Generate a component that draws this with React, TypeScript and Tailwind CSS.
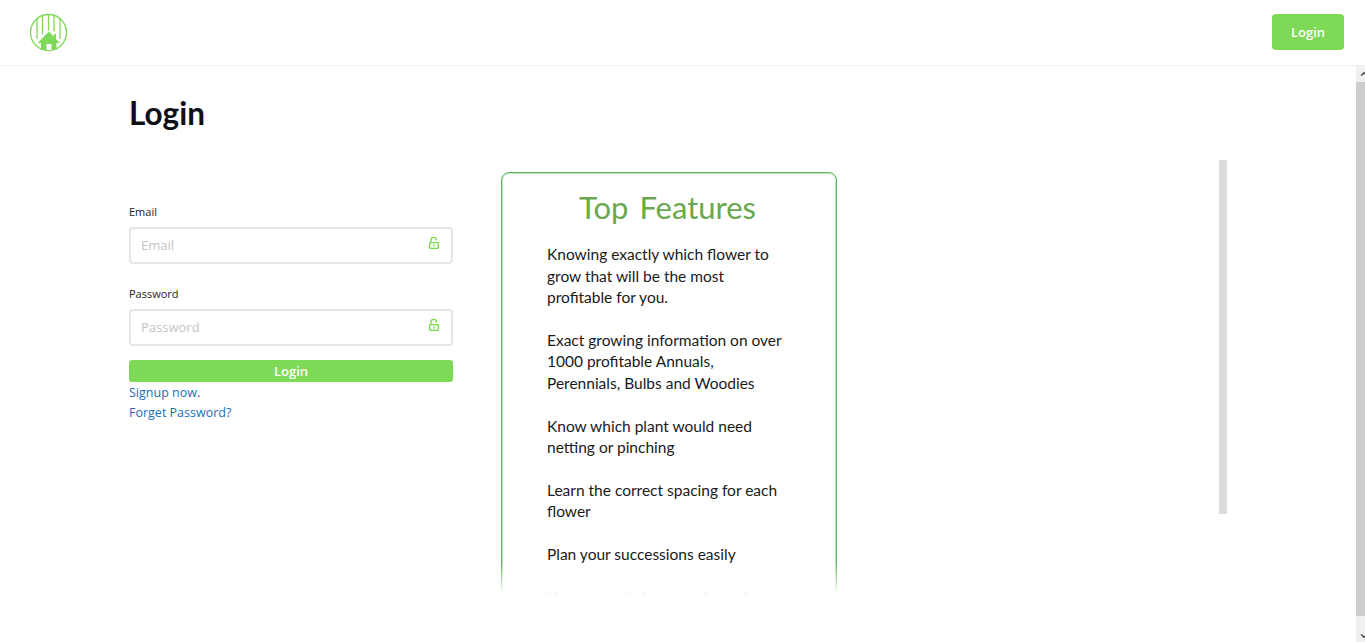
import { ChevronDown, ChevronUp } from "lucide-react";

const features = [
  "Knowing exactly which flower to grow that will be the most profitable for you.",
  "Exact growing information on over 1000 profitable Annuals, Perennials, Bulbs and Woodies",
  "Know which plant would need netting or pinching",
  "Learn the correct spacing for each flower",
  "Plan your successions easily",
  "Know exactly how much to plant",
];

function Logo() {
  return (
    <svg width="40" height="40" viewBox="0 0 40 40" fill="none">
      <circle cx="19.5" cy="19.5" r="18" stroke="#7ed957" strokeWidth="1.3" />
      <path d="M8 5v21M13.5 2.5v19M19.5 1.5v16M25 2.5v16M31 5v21" stroke="#7ed957" strokeWidth="1.3" />
      <path d="M20 18.5 8.5 30H12v7h15.5v-7H31l-4-4v-5h-2v2.5Z" fill="#7ed957" />
      <rect x="17.5" y="31" width="5" height="6" fill="#fff" />
    </svg>
  );
}

function OpenLock() {
  return (
    <svg width="10" height="12" viewBox="0 0 10 12" fill="none" stroke="#74dc45" strokeWidth="1.3">
      <path d="M2 5.5V3a2.7 2.7 0 0 1 5.4 0v.4" />
      <rect x="0.7" y="5.7" width="8.6" height="5.6" rx="0.5" />
      <path d="M5 7.3v2.4" />
    </svg>
  );
}

function Field({ label }: { label: string }) {
  return (
    <div>
      <label className="block text-[11px] leading-[16px] text-[#222]">{label}</label>
      <div className="mt-[7px] flex h-[37px] items-center justify-between rounded-[4px] border-2 border-[#e6e6e6] bg-white pl-[10px] pr-[12px]">
        <span className="text-[13px] text-[#c4c4c4]">{label}</span>
        <span className="-mt-[5px] flex"><OpenLock /></span>
      </div>
    </div>
  );
}

export default function App() {
  return (
    <div className="flex h-[642px] flex-col overflow-hidden bg-white font-['Open_Sans',sans-serif]">
      <header className="flex h-[66px] shrink-0 items-center justify-between border-b border-[#efefef] pl-[29px] pr-[21px]">
        <Logo />
        <button type="button" className="-mt-[2px] h-[36px] w-[72px] rounded-[4px] bg-[#7ed957] pt-[2px] text-[13px] font-semibold text-white">
          Login
        </button>
      </header>

      <div className="flex min-h-0 flex-1">
        <main className="min-w-0 flex-1 pl-[129px]">
          <h1 className="pt-[28px] font-['Lato',sans-serif] text-[31.5px] font-bold leading-[38px] text-[#0d1117]">Login</h1>
          <div className="mt-[28px] flex">
            <div className="w-[324px] shrink-0 pt-[44px]">
              <Field label="Email" />
              <div className="mt-[22px]">
                <Field label="Password" />
              </div>
              <button type="button" className="mt-[14px] block h-[22px] w-full rounded-[3px] bg-[#7ed957] text-[13px] font-semibold leading-[22px] text-white">
                Login
              </button>
              <a className="mt-[1px] block text-[12.5px] leading-[20px] text-[#1a6fba]">Signup now.</a>
              <a className="block text-[12.5px] leading-[20px] text-[#1a6fba]">Forget Password?</a>
            </div>

            <div className="relative ml-[48px] mt-[12px] h-[423px] w-[336px] shrink-0 overflow-hidden">
              <div className="h-[520px] rounded-[8px] border border-[#5cb85c] p-px font-['Lato',sans-serif] shadow-[inset_0_0_0_1px_#c2e5bd]">
                <h2 className="pr-[3px] pt-[10px] text-center text-[31px] font-normal leading-[46px] text-[#6aa84f] [word-spacing:3px]">Top Features</h2>
                <div className="mt-[14.4px] pl-[44px] pr-[50px] text-[15.5px] leading-[21.4px] text-[#1a1a1a]">
                  {features.map((f) => (
                    <p key={f} className="mb-[21.4px]">{f}</p>
                  ))}
                </div>
              </div>
              <div className="absolute inset-x-0 bottom-0 h-[32px] bg-gradient-to-b from-white/0 to-white" />
            </div>

            <div className="ml-[382px] h-[354px] w-[8px] shrink-0 bg-[#dcdcdc]" />
          </div>
        </main>

        <aside className="flex w-[9px] shrink-0 flex-col bg-[#f0f0f0]">
          <div className="flex h-[16px] items-center overflow-hidden text-[#505050]"><ChevronUp size={10} strokeWidth={3.5} className="ml-[3px] shrink-0" /></div>
          <div className="flex-1 bg-[#cdcdcd]" />
          <div className="flex h-[26px] items-end overflow-hidden text-[#505050]"><ChevronDown size={10} strokeWidth={3.5} className="mb-[1px] ml-[3px] shrink-0" /></div>
        </aside>
      </div>
    </div>
  );
}
